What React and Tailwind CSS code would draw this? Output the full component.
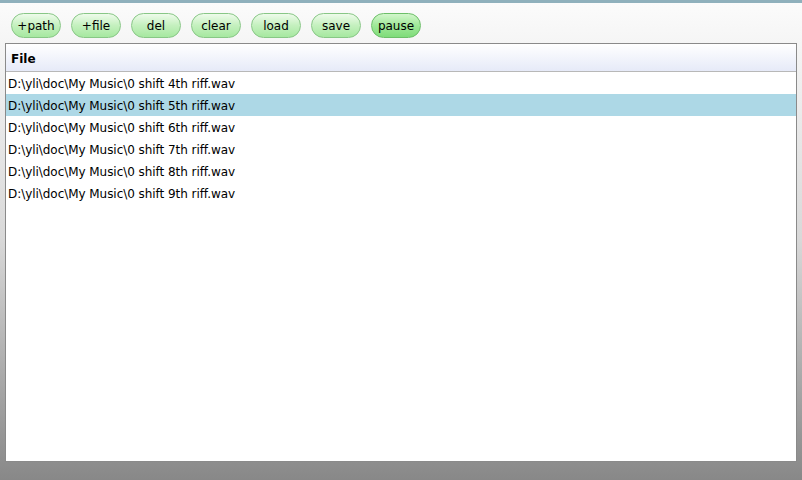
const buttons = ['+path', '+file', 'del', 'clear', 'load', 'save', 'pause'];

const files = [
  'D:\\yli\\doc\\My Music\\0 shift 4th riff.wav',
  'D:\\yli\\doc\\My Music\\0 shift 5th riff.wav',
  'D:\\yli\\doc\\My Music\\0 shift 6th riff.wav',
  'D:\\yli\\doc\\My Music\\0 shift 7th riff.wav',
  'D:\\yli\\doc\\My Music\\0 shift 8th riff.wav',
  'D:\\yli\\doc\\My Music\\0 shift 9th riff.wav',
];

const PillButton = ({ label, active }) => (
  <button
    className={
      'w-[50px] h-[25px] rounded-full border text-[12px] leading-none text-black flex items-center justify-center ' +
      (active
        ? 'border-[#6cbf68] bg-gradient-to-b from-[#d2f6cc] via-[#9fe898] to-[#7fdc7a]'
        : 'border-[#88c786] bg-gradient-to-b from-[#eefbeb] via-[#c4f0be] to-[#a6e8a0]')
    }
  >
    {label}
  </button>
);

const App = () => {
  return (
    <div
      className="w-[802px] h-[480px] flex flex-col border-t-[3px] border-[#8fb0bc] bg-gradient-to-b from-[#fbfbfb] via-[#d8d8d8] to-[#888888] overflow-hidden"
      style={{ fontFamily: '"DejaVu Sans", Verdana, sans-serif' }}
    >
      <div className="h-[40px] flex items-start gap-[10px] pl-[11px] pt-[10px]">
        {buttons.map((b) => (
          <PillButton key={b} label={b} active={b === 'pause'} />
        ))}
      </div>

      <div className="ml-[5px] w-[792px] h-[419px] bg-white border border-[#8a8a8a] flex flex-col">
        <div className="h-[28px] flex items-center pl-[5px] pt-[2px] border-b border-[#b8b8b8] bg-gradient-to-b from-white to-[#e6eaf8] text-[12px] font-bold text-black">
          File
        </div>
        {files.map((f, i) => (
          <div
            key={f}
            className={
              'h-[22px] flex items-center pl-[2px] pt-[1px] text-[12px] text-black tracking-[-0.05px] ' +
              (i === 1 ? 'bg-[#add8e6]' : '')
            }
          >
            {f}
          </div>
        ))}
      </div>
    </div>
  );
};

export default App;
